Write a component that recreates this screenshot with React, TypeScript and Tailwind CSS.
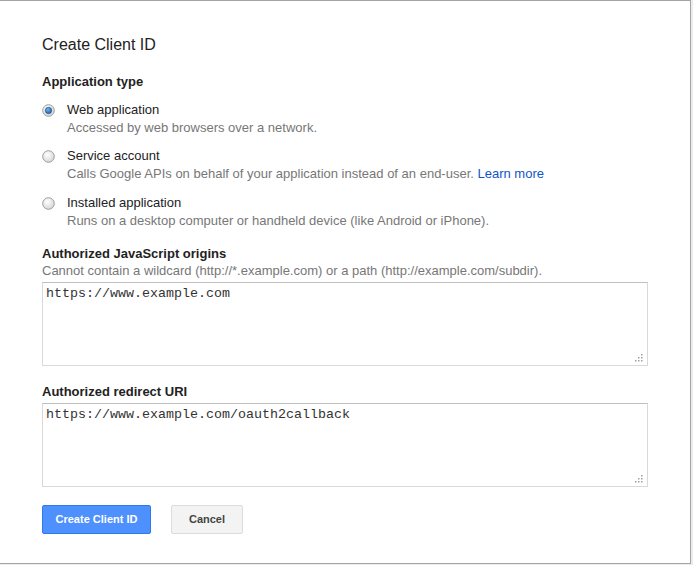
import React from "react";

function Radio(props: { checked?: boolean }) {
  return (
    <svg width="13" height="13" viewBox="0 0 13 13" className="mt-[3px] shrink-0">
      <defs>
        <radialGradient id="rg" cx="0.4" cy="0.35" r="0.7">
          <stop offset="0" stopColor="#ffffff" />
          <stop offset="1" stopColor="#d4d4d4" />
        </radialGradient>
        <radialGradient id="rb" cx="0.4" cy="0.35" r="0.7">
          <stop offset="0" stopColor="#6fb6f0" />
          <stop offset="1" stopColor="#1a5d9c" />
        </radialGradient>
      </defs>
      <circle cx="6.5" cy="6.5" r="5.8" fill="url(#rg)" stroke="#9d9d9d" strokeWidth="1" />
      {props.checked ? <circle cx="6.5" cy="6.5" r="3.2" fill="url(#rb)" stroke="#174f85" strokeWidth="0.6" /> : null}
    </svg>
  );
}

function Grip() {
  const dots = [
    [7, 1],
    [4, 4],
    [7, 4],
    [1, 7],
    [4, 7],
    [7, 7],
  ];
  return (
    <svg width="9" height="9" viewBox="0 0 9 9" className="absolute bottom-[3px] right-[4px]">
      {dots.map(([x, y], i) => (
        <rect key={i} x={x} y={y} width="1.5" height="1.5" fill="#a0a0a0" />
      ))}
    </svg>
  );
}

function Box(props: { value: string }) {
  return (
    <div className="relative h-[84px] w-[606px] border border-[#d9d9d9] border-t-[#c0c0c0] bg-white px-[3px] pt-[4px]">
      <div className="font-['Liberation_Mono','Courier_New',monospace] text-[13.33px] leading-[14px] text-[#333]">{props.value}</div>
      <Grip />
    </div>
  );
}

const options = [
  { label: "Web application", desc: "Accessed by web browsers over a network.", checked: true },
  { label: "Service account", desc: "Calls Google APIs on behalf of your application instead of an end-user.", link: "Learn more" },
  { label: "Installed application", desc: "Runs on a desktop computer or handheld device (like Android or iPhone)." },
];

export default function App() {
  return (
    <div className="flex h-[565px] w-[693px] bg-[#ececec] font-['Liberation_Sans',Arial,sans-serif] text-[13px] text-[#222]">
      <div className="h-[564px] w-[691px] shrink-0 border-b border-r border-t border-[#a4a4a4] bg-white pl-[42px] pt-[34px]">
        <div className="text-[16px] leading-[20px]">Create Client ID</div>

        <div className="mt-[19px] font-bold leading-[16px]">Application type</div>

        <div className="mt-[11px] flex flex-col">
          {options.map((o, i) => (
            <div key={o.label} className={i === 0 ? "flex gap-[6px]" : i === 1 ? "mt-[10px] flex gap-[6px]" : "mt-[11px] flex gap-[6px]"}>
              <Radio checked={o.checked} />
              <div className="pl-[6px]">
                <div className="leading-[18px]">{o.label}</div>
                <div className="leading-[18px] text-[#777]">
                  {o.desc}
                  {o.link ? <span className="text-[#1155cc]"> {o.link}</span> : null}
                </div>
              </div>
            </div>
          ))}
        </div>

        <div className="mt-[16px] font-bold leading-[16px]">Authorized JavaScript origins</div>
        <div className="leading-[18px] text-[#777]">Cannot contain a wildcard (http://*.example.com) or a path (http://example.com/subdir).</div>
        <div className="mt-[2px]">
          <Box value="https://www.example.com" />
        </div>

        <div className="mt-[18px] font-bold leading-[16px]">Authorized redirect URI</div>
        <div className="mt-[3px]">
          <Box value="https://www.example.com/oauth2callback" />
        </div>

        <div className="mt-[18px] flex gap-[20px]">
          <button className="h-[29px] w-[109px] rounded-[2px] border border-[#3079ed] bg-[#4d90fe] text-[11px] font-bold text-white">
            Create Client ID
          </button>
          <button className="h-[29px] w-[72px] rounded-[2px] border border-[#dcdcdc] bg-[#f3f3f3] text-[11px] font-bold text-[#444]">
            Cancel
          </button>
        </div>
      </div>
    </div>
  );
}
